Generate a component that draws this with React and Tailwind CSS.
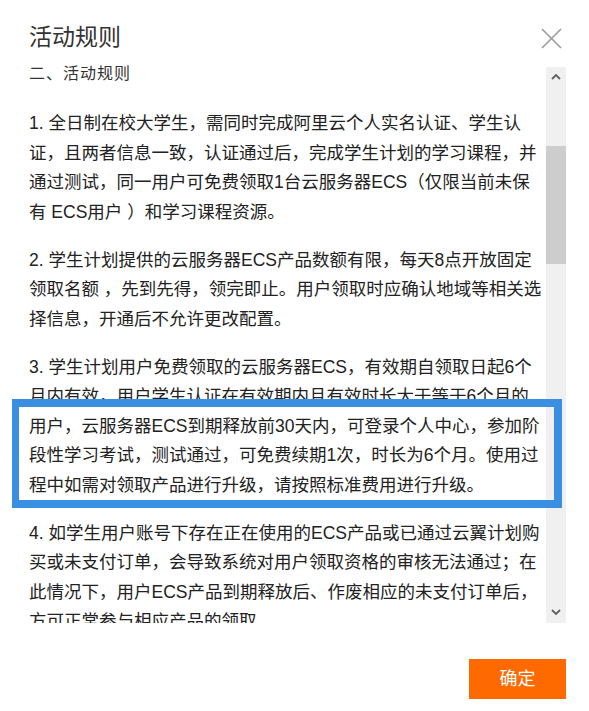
const paragraphs = [
  [
    "1. 全日制在校大学生，需同时完成阿里云个人实名认证、学生认",
    "证，且两者信息一致，认证通过后，完成学生计划的学习课程，并",
    "通过测试，同一用户可免费领取1台云服务器ECS（仅限当前未保",
    "有 ECS用户 ）和学习课程资源。",
  ],
  [
    "2. 学生计划提供的云服务器ECS产品数额有限，每天8点开放固定",
    "领取名额 ，先到先得，领完即止。用户领取时应确认地域等相关选",
    "择信息，开通后不允许更改配置。",
  ],
  [
    "3. 学生计划用户免费领取的云服务器ECS，有效期自领取日起6个",
    "月内有效，用户学生认证在有效期内且有效时长大于等于6个月的",
    "用户，云服务器ECS到期释放前30天内，可登录个人中心，参加阶",
    "段性学习考试，测试通过，可免费续期1次，时长为6个月。使用过",
    "程中如需对领取产品进行升级，请按照标准费用进行升级。",
  ],
  [
    "4. 如学生用户账号下存在正在使用的ECS产品或已通过云翼计划购",
    "买或未支付订单，会导致系统对用户领取资格的审核无法通过；在",
    "此情况下，用户ECS产品到期释放后、作废相应的未支付订单后，",
    "方可正常参与相应产品的领取。",
  ],
];

function Chevron({ down }) {
  return (
    <svg width="10" height="6" viewBox="0 0 10 6" className="block">
      <path
        d={down ? "M1 1 L5 5 L9 1" : "M1 5 L5 1 L9 5"}
        fill="none"
        stroke="#606060"
        strokeWidth="1.8"
      />
    </svg>
  );
}

export default function App() {
  return (
    <div className="relative w-[589px] h-[711px] bg-white text-[#333] font-['Liberation_Sans','Noto_Sans_CJK_SC',sans-serif]">
      {/* header */}
      <div className="flex justify-between pl-[29px] pr-[27px] h-[64px]">
        <h2 className="pt-[25px] text-[23px] leading-[24px] font-normal">活动规则</h2>
        <button className="mt-[28px] w-[21px] h-[21px]">
          <svg width="21" height="21" viewBox="0 0 21 21" className="block">
            <path d="M1 1 L20 20 M20 1 L1 20" stroke="#9a9a9a" strokeWidth="1.6" fill="none" />
          </svg>
        </button>
      </div>

      {/* body */}
      <div className="flex h-[559px]">
        <div className="ml-[29px] w-[517px] overflow-hidden">
          <p className="text-[16px] leading-[20px] tracking-[1px]">二、活动规则</p>
          <div className="mt-[25px]">
            {paragraphs.map((lines, i) => (
              <p key={i} className="text-[17.5px] leading-[29.5px] whitespace-nowrap text-[#222] mb-[18.5px]">
                {lines.map((l, j) => (
                  <span key={j} className="block">{l}</span>
                ))}
              </p>
            ))}
          </div>
        </div>
        <div className="mt-[3px] w-[20px] h-[556px] bg-[#f0f0f0] flex flex-col items-center">
          <div className="mt-[7px]">
            <Chevron />
          </div>
          <div className="mt-[66px] w-full h-[118px] bg-[#cdcdcd]" />
          <div className="flex-1" />
          <div className="mb-[8px]">
            <Chevron down />
          </div>
        </div>
      </div>

      {/* footer */}
      <div className="flex justify-end pr-[23px] mt-[36px]">
        <button className="w-[97px] h-[40px] bg-[#ff6a00] text-white text-[18px]">确定</button>
      </div>

      {/* highlight annotation */}
      <div className="absolute left-[12px] top-[399px] w-[550px] h-[109px] border-[8px] border-l-[7px] border-[#3a8fe0] pointer-events-none" />
    </div>
  );
}
